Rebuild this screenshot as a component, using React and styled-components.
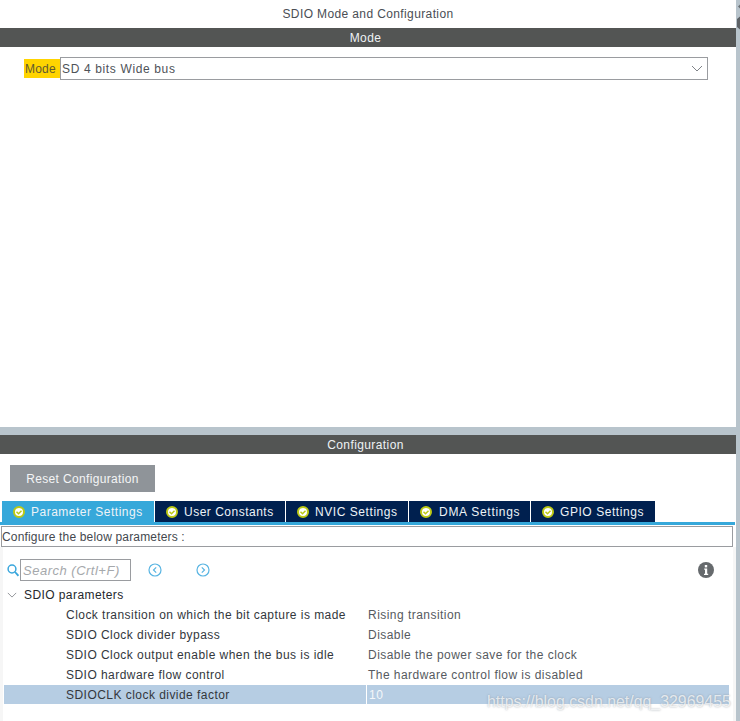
import React from 'react';
import styled, { createGlobalStyle } from 'styled-components';

const Global = createGlobalStyle`
  html, body { margin: 0; padding: 0; background: #fff; }
  body { font-family: "Liberation Sans", Arial, sans-serif; font-size: 12px; color: #45494f; }
`;

const Page = styled.div`
  position: relative;
  display: flex;
  width: 740px;
  height: 721px;
  overflow: hidden;
`;
const Main = styled.div`
  display: flex;
  flex-direction: column;
  width: 736px;
`;
const ScrollStrip = styled.div`
  width: 4px;
  background: #b8c4cc;
  display: flex;
  align-items: flex-start;
`;
const Title = styled.div`
  height: 28px;
  display: flex;
  align-items: center;
  justify-content: center;
  font-size: 12px;
  letter-spacing: 0.38px;
  color: #4a4e54;
`;
const SectionBar = styled.div`
  height: 19px;
  padding-right: 5px;
  background: #535554;
  color: #eef2f5;
  display: flex;
  align-items: center;
  justify-content: center;
  font-size: 12px;
  letter-spacing: 0.4px;
`;
const ModePane = styled.div`
  height: 380px;
  padding: 10px 28px 0 24px;
  box-sizing: border-box;
  display: flex;
  align-items: flex-start;
`;
const ModeLabel = styled.span`
  margin-top: 2px;
  width: 36px;
  height: 19px;
  padding-left: 1px;
  box-sizing: border-box;
  background: #ffd400;
  color: #5f5a30;
  line-height: 21px;
  font-size: 12px;
  letter-spacing: 0.2px;
  white-space: nowrap;
`;
const Select = styled.div`
  flex: 1;
  height: 23px;
  box-sizing: border-box;
  border: 1px solid #9a9ca0;
  display: flex;
  align-items: center;
  justify-content: space-between;
  padding: 0 4px 0 1px;
  font-size: 12px;
  letter-spacing: 0.64px;
  color: #4e5258;
`;
const Splitter = styled.div`
  height: 8px;
  background: #b8c4cc;
`;
const ResetButton = styled.div`
  margin: 11px 0 0 10px;
  width: 145px;
  height: 27px;
  background: #8f9499;
  color: #f4f5f6;
  display: flex;
  align-items: center;
  justify-content: center;
  font-size: 12px;
  letter-spacing: 0.35px;
`;
const Tabs = styled.div`
  margin: 9px 0 0 2px;
  display: flex;
  gap: 1px;
  height: 21px;
`;
const Tab = styled.div`
  width: ${p => p.$w}px;
  background: ${p => (p.$active ? '#36a8da' : '#00204f')};
  color: #eef3f7;
  display: flex;
  align-items: center;
  padding-left: 11px;
  box-sizing: border-box;
  gap: ${p => p.$gap}px;
  font-size: 12px;
  letter-spacing: ${p => p.$spacing}px;
  white-space: nowrap;
`;
const TabRule = styled.div`
  height: 3px;
  width: 735px;
  background: #36a8da;
`;
const ConfigureBox = styled.div`
  margin: 1px 0 0 1px;
  width: 732px;
  height: 21px;
  box-sizing: border-box;
  border: 1px solid #9a9ca0;
  line-height: 21px;
  font-size: 12px;
  letter-spacing: 0.17px;
  color: #44484e;
`;
const ParamPane = styled.div`
  flex: 1;
  border-left: 3px solid #f6f6f6;
  border-right: 3px solid #f6f6f6;
`;
const SearchRow = styled.div`
  margin-top: 12px;
  height: 22px;
  display: flex;
  align-items: center;
  padding-left: 4px;
`;
const SearchInput = styled.div`
  margin-left: 1px;
  width: 111px;
  height: 22px;
  box-sizing: border-box;
  border: 1px solid #9a9ca0;
  padding-left: 2px;
  line-height: 21px;
  font-size: 13px;
  font-style: italic;
  letter-spacing: 0.5px;
  color: #a5a8ab;
  white-space: nowrap;
`;
const NavIcons = styled.div`
  margin-left: 17px;
  display: flex;
  gap: 34px;
`;
const InfoSlot = styled.div`
  margin-left: auto;
  margin-right: 19px;
  display: flex;
`;
const Tree = styled.div`
  margin: 3px 0 0 1px;
  width: 725px;
`;
const GroupRow = styled.div`
  height: 20px;
  box-sizing: border-box;
  padding: 1px 0 0 3px;
  display: flex;
  align-items: center;
  gap: 7px;
  font-size: 12px;
  letter-spacing: 0.42px;
  color: #25282c;
`;
const Row = styled.div`
  display: grid;
  grid-template-columns: 362px 1fr;
  height: ${p => (p.$selected ? 19 : 20)}px;
  margin-top: ${p => (p.$selected ? 1 : 0)}px;
  padding-top: ${p => (p.$selected ? 0 : 1)}px;
  box-sizing: border-box;
  background: ${p => (p.$selected ? '#b6cde3' : 'transparent')};
  align-items: center;
  font-size: 12px;
  letter-spacing: 0.46px;
`;
const RowName = styled.div`
  padding-left: 62px;
  color: #33373c;
  white-space: nowrap;
`;
const RowValue = styled.div`
  align-self: stretch;
  display: flex;
  align-items: center;
  padding-left: ${p => (p.$selected ? 2 : 1)}px;
  color: ${p => (p.$selected ? '#f4f7fa' : '#565a60')};
  border-left: 1px solid ${p => (p.$selected ? '#fff' : 'transparent')};
  white-space: nowrap;
`;
const Watermark = styled.div`
  position: absolute;
  left: 487px;
  top: 693px;
  font-size: 15.9px;
  line-height: 18px;
  color: rgba(255, 255, 255, 0.72);
  text-shadow: 0 0 2px rgba(130, 140, 150, 0.75);
  white-space: nowrap;
`;

const Chevron = ({ color = '#7f8388', w = 12, h = 7 }) => (
  <svg width={w} height={h} viewBox="0 0 12 7" fill="none" style={{ flex: 'none' }}>
    <path d="M1 1l5 5 5-5" stroke={color} strokeWidth="1" />
  </svg>
);

const StripArrows = () => (
  <svg width="4" height="32" viewBox="0 0 4 32">
    <path d="M4 4.500L2 6.500L4 8.500z" fill="#6a7075" />
    <path d="M4 16.500L1 19L1 27L4 29.500z" fill="#5d6266" />
  </svg>
);

const Check = () => (
  <svg width="12" height="12" viewBox="0 0 12 12" style={{ flex: 'none' }}>
    <circle cx="6" cy="6" r="5" fill="#fff" stroke="#bcc914" strokeWidth="2" />
    <path d="M3.500 5.800l2 2 3-3" fill="none" stroke="#bcc914" strokeWidth="1.500" />
  </svg>
);

const SearchGlyph = () => (
  <svg width="12" height="13" viewBox="0 0 12 13" fill="none" style={{ flex: 'none' }}>
    <circle cx="5" cy="5" r="3.900" stroke="#39a6dc" strokeWidth="1.500" />
    <path d="M8 8l3.400 3.800" stroke="#39a6dc" strokeWidth="1.800" />
  </svg>
);

const Nav = ({ dir }) => (
  <svg width="14" height="14" viewBox="0 0 14 14" fill="none">
    <circle cx="7" cy="7" r="6" stroke="#58b4e2" strokeWidth="1.200" />
    <path d={dir === 'l' ? 'M8.200 4.300L5.500 7l2.700 2.700' : 'M5.800 4.300L8.500 7 5.800 9.700'} stroke="#58b4e2" strokeWidth="1.200" />
  </svg>
);

const Info = () => (
  <svg width="16" height="16" viewBox="0 0 16 16">
    <circle cx="8" cy="8" r="8" fill="#666a6d" />
    <rect x="6.800" y="3" width="2.400" height="2.400" fill="#fff" />
    <path d="M6.200 6.500h3v5.200h1v1.200H6v-1.200h1V7.700H6.200z" fill="#fff" />
  </svg>
);

const tabs = [
  { label: 'Parameter Settings', w: 152, active: true, gap: 6, spacing: 0.5 },
  { label: 'User Constants', w: 130, gap: 6, spacing: 0.5 },
  { label: 'NVIC Settings', w: 122, gap: 6, spacing: 0.56 },
  { label: 'DMA Settings', w: 121, gap: 7, spacing: 0.72 },
  { label: 'GPIO Settings', w: 124, gap: 6, spacing: 0.56 },
];

const rows = [
  ['Clock transition on which the bit capture is made', 'Rising transition'],
  ['SDIO Clock divider bypass', 'Disable'],
  ['SDIO Clock output enable when the bus is idle', 'Disable the power save for the clock'],
  ['SDIO hardware flow control', 'The hardware control flow is disabled'],
  ['SDIOCLK clock divide factor', '10', true],
];

export default function App() {
  return (
    <Page>
      <Global />
      <Main>
        <Title>SDIO Mode and Configuration</Title>
        <SectionBar>Mode</SectionBar>
        <ModePane>
          <ModeLabel>Mode</ModeLabel>
          <Select>
            SD 4 bits Wide bus
            <Chevron />
          </Select>
        </ModePane>
        <Splitter />
        <SectionBar>Configuration</SectionBar>
        <ResetButton>Reset Configuration</ResetButton>
        <Tabs>
          {tabs.map(t => (
            <Tab key={t.label} $w={t.w} $active={t.active} $gap={t.gap} $spacing={t.spacing}>
              <Check />
              {t.label}
            </Tab>
          ))}
        </Tabs>
        <TabRule />
        <ConfigureBox>Configure the below parameters :</ConfigureBox>
        <ParamPane>
          <SearchRow>
            <SearchGlyph />
            <SearchInput>Search (Crtl+F)</SearchInput>
            <NavIcons>
              <Nav dir="l" />
              <Nav dir="r" />
            </NavIcons>
            <InfoSlot>
              <Info />
            </InfoSlot>
          </SearchRow>
          <Tree>
            <GroupRow>
              <Chevron w={10} h={6} />
              SDIO parameters
            </GroupRow>
            {rows.map(([name, value, selected]) => (
              <Row key={name} $selected={selected}>
                <RowName>{name}</RowName>
                <RowValue $selected={selected}>{value}</RowValue>
              </Row>
            ))}
          </Tree>
        </ParamPane>
      </Main>
      <ScrollStrip>
        <StripArrows />
      </ScrollStrip>
      <Watermark>https://blog.csdn.net/qq_32969455</Watermark>
    </Page>
  );
}
